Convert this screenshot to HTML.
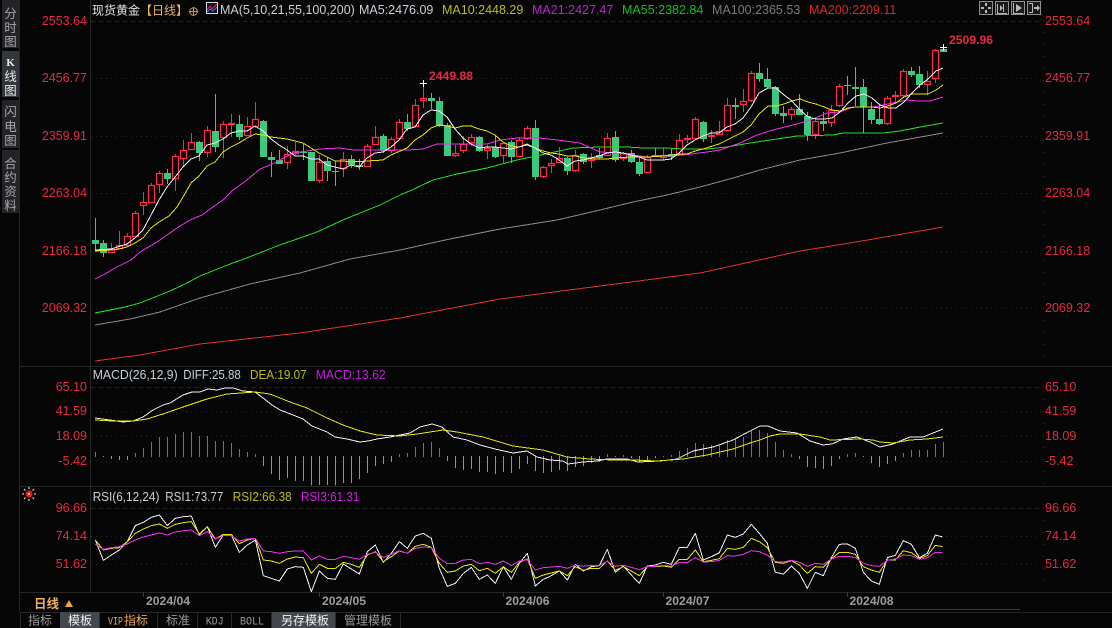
<!DOCTYPE html>
<html><head><meta charset="utf-8"><title>现货黄金</title>
<style>
html,body{margin:0;padding:0;background:#060606;width:1112px;height:628px;overflow:hidden}
svg{display:block;position:absolute;left:0;top:0}
text{font-family:"Liberation Sans","Noto Sans CJK SC",sans-serif;font-size:12.5px;white-space:pre}
.r{fill:#e62a42}
.e{text-anchor:end}
.s{font-size:12.5px;fill:#a8a8a8;text-anchor:middle;font-family:"Noto Sans CJK SC","Liberation Sans",sans-serif}
.t{font-size:12px;fill:#9a9a9a;font-family:"Noto Sans CJK SC","Liberation Sans",sans-serif}
.m{font-family:"Liberation Mono","Noto Sans CJK SC",monospace;font-size:11px}
.d{fill:#9c9c9c;font-weight:bold;font-size:12.2px}
.l{fill:none;stroke-width:1;stroke-linejoin:round;shape-rendering:crispEdges}
.z{vector-effect:non-scaling-stroke}
</style></head><body>
<svg width="1112" height="628" viewBox="0 0 1112 628" xmlns="http://www.w3.org/2000/svg">
<rect width="1112" height="628" fill="#060606"/>

<!-- sidebar -->
<rect x="2" y="0" width="17" height="48" fill="#222428"/>
<rect x="2" y="51" width="17" height="46" fill="#34363d"/>
<rect x="2" y="100" width="17" height="48" fill="#222428"/>
<rect x="2" y="150" width="17" height="63" fill="#222428"/>
<text class="s" x="10.5" y="18">分</text><text class="s" x="10.5" y="32">时</text><text class="s" x="10.5" y="46">图</text>
<text class="s" x="10.5" y="66" style="font-family:'Liberation Serif',serif;font-weight:bold;font-size:11px;fill:#e8e8e8">K</text><text class="s" x="10.5" y="81" style="fill:#e8e8e8">线</text><text class="s" x="10.5" y="95" style="fill:#e8e8e8">图</text>
<text class="s" x="10.5" y="116">闪</text><text class="s" x="10.5" y="131">电</text><text class="s" x="10.5" y="145">图</text>
<text class="s" x="10.5" y="168">合</text><text class="s" x="10.5" y="182">约</text><text class="s" x="10.5" y="196">资</text><text class="s" x="10.5" y="210">料</text>

<!-- frame lines -->
<g stroke="#262626" stroke-width="1" fill="none">
<path d="M19.5 0V612M90.5 0V592M20 366.5H1112M20 486.5H1112M20 592.5H1112M20 612.5H1112"/>
</g>
<path d="M670 609.5H1020" stroke="#3a3a3a"/>

<!-- grid -->
<g fill="none" stroke="#262626">
<path stroke-dasharray="4 4" d="M91 21.5H1040M91 387.5H1040M91 508.5H1040"/>
<path stroke-dasharray="1 4" d="M91 78.5H1040M91 136.5H1040M91 193.5H1040M91 251.5H1040M91 308.5H1040M91 411.5H1040M91 436.5H1040M91 461.5H1040M91 536.5H1040M91 564.5H1040"/>
<path stroke-dasharray="1 11" stroke="#333" d="M1043.5 20V366M1043.5 387V486M1043.5 508V590"/>
</g>

<!-- left axis -->
<g class="r">
<text class="r e" x="87" y="25">2553.64</text><text class="r e" x="87" y="82">2456.77</text><text class="r e" x="87" y="140">2359.91</text><text class="r e" x="87" y="197">2263.04</text><text class="r e" x="87" y="255">2166.18</text><text class="r e" x="87" y="312">2069.32</text>
<text class="r e" x="87" y="391">65.10</text><text class="r e" x="87" y="415">41.59</text><text class="r e" x="87" y="440">18.09</text><text class="r e" x="87" y="465">-5.42</text>
<text class="r e" x="87" y="512">96.66</text><text class="r e" x="87" y="540">74.14</text><text class="r e" x="87" y="568">51.62</text>
<text class="r" x="1045" y="25">2553.64</text><text class="r" x="1045" y="82">2456.77</text><text class="r" x="1045" y="140">2359.91</text><text class="r" x="1045" y="197">2263.04</text><text class="r" x="1045" y="255">2166.18</text><text class="r" x="1045" y="312">2069.32</text>
<text class="r" x="1045" y="391">65.10</text><text class="r" x="1045" y="415">41.59</text><text class="r" x="1045" y="440">18.09</text><text class="r" x="1045" y="465">-5.42</text>
<text class="r" x="1045" y="512">96.66</text><text class="r" x="1045" y="540">74.14</text><text class="r" x="1045" y="568">51.62</text>
</g>

<!-- header -->
<text x="92" y="14.5" fill="#e6e6e6" style="font-size:12px">现货黄金</text>
<text x="140" y="14.5" fill="#f0b25a" style="font-size:12px">【日线】</text>
<g fill="none" stroke="#c89a4a"><circle cx="193.5" cy="11.5" r="3.8"/><path d="M189 11.5H198M193.5 7V16"/></g>
<rect x="206.5" y="2.5" width="11" height="11" fill="#101030" stroke="#d8d8e8"/>
<path d="M207 10L210 6L212 9L217 4" stroke="#e83030" fill="none"/><path d="M207 12L210 9L213 11L217 7" stroke="#4a70e8" fill="none"/>
<text x="220" y="14" fill="#c8d0d8">MA(5,10,21,55,100,200)</text>
<text x="359" y="14" fill="#c8d0d8">MA5:2476.09</text>
<text x="442" y="14" fill="#bcbc20">MA10:2448.29</text>
<text x="532" y="14" fill="#c020d8">MA21:2427.47</text>
<text x="622" y="14" fill="#10c020">MA55:2382.84</text>
<text x="712" y="14" fill="#747c80">MA100:2365.53</text>
<text x="809" y="14" fill="#d82828">MA200:2209.11</text>

<!-- toolbar icons -->
<g fill="#1a1a1a" stroke="#909090">
<rect x="979.5" y="1.5" width="13" height="13"/><rect x="995.5" y="1.5" width="13" height="13"/><rect x="1011.5" y="1.5" width="13" height="13"/><rect x="1027.5" y="1.5" width="13" height="13"/>
</g>
<g fill="#b8b8b8">
<path d="M985 3h2v3h-2zM985 10h2v3h-2zM981 7h3v2h-3zM988 7h3v2h-3z"/>
<path d="M1003 4h1v8h-1zM1000 5l3 3-3 3zM997 4h1v9h9v1h-10z"/>
<path d="M1016 4l6 4-6 4zM1013 3h1v10h9v1h-10z"/>
<path d="M1029 3h4v10h-4v-1h3V4h-3zM1034 7h3V5l3 3-3 3V9h-3z"/>
</g>

<!-- candles: red wicks -->
<path stroke="#ff2a4c" stroke-width="1" fill="none" d="M111.5 243V253M119.5 231V249M127.5 233V247M135.5 211V237M143.5 192V215M151.5 183V203M159.5 171V193M175.5 154V191M183.5 140V167M191.5 133V150M207.5 126V157M223.5 121V158M231.5 114V137M247.5 117V136M255.5 102V128M287.5 146V169M295.5 142V155M319.5 155V183M343.5 152V177M367.5 144V167M375.5 126V145M391.5 137V153M399.5 119V139M415.5 99V127M423.5 83V108M455.5 145V157M463.5 136V153M471.5 134V146M487.5 145V159M503.5 143V163M519.5 137V157M527.5 126V140M543.5 166V178M551.5 159V173M559.5 147V163M575.5 150V172M591.5 153V168M607.5 133V156M623.5 152V161M647.5 155V173M663.5 148V160M679.5 134V156M687.5 135V143M695.5 117V140M711.5 130V143M719.5 121V135M727.5 98V131M743.5 89V112M751.5 71V102M791.5 107V120M815.5 118V139M831.5 105V127M839.5 84V107M887.5 96V125M895.5 91V103M903.5 69V97M927.5 71V95M935.5 49V83"/>
<!-- green wicks -->
<path stroke="#3cc880" stroke-width="1" fill="none" d="M95.5 218V250M103.5 240V257M167.5 169V184M199.5 141V161M215.5 94V152M239.5 115V140M263.5 120V157M271.5 152V177M279.5 150V164M303.5 144V160M311.5 152V181M327.5 157V181M335.5 161V186M351.5 155V168M359.5 159V170M383.5 134V153M407.5 114V131M431.5 93V109M439.5 97V127M447.5 123V156M479.5 136V152M495.5 135V158M511.5 140V163M535.5 120V180M567.5 157V175M583.5 153V164M599.5 148V159M615.5 131V162M631.5 150V163M639.5 158V176M655.5 148V157M671.5 149V160M703.5 121V142M735.5 98V119M759.5 63V82M767.5 68V88M775.5 86V116M783.5 106V123M799.5 94V115M807.5 112V141M823.5 112V131M847.5 76V95M855.5 67V106M863.5 79V133M871.5 102V124M879.5 105V125M911.5 67V77M919.5 66V88M943.5 47V52"/>
<!-- green bodies -->
<path fill="#3ac97f" d="M92 240h7v4h-7zM100 243h7v10h-7zM164 173h7v6h-7zM196 142h7v11h-7zM212 131h7v16h-7zM236 124h7v13h-7zM260 121h7v36h-7zM268 157h7v3h-7zM276 160h7v4h-7zM300 152h7v1h-7zM308 152h7v29h-7zM324 161h7v10h-7zM332 171h7v1h-7zM348 159h7v6h-7zM356 165h7v2h-7zM380 136h7v15h-7zM404 122h7v7h-7zM428 98h7v3h-7zM436 101h7v25h-7zM444 125h7v31h-7zM476 137h7v14h-7zM492 147h7v10h-7zM508 142h7v15h-7zM532 128h7v49h-7zM564 158h7v13h-7zM580 154h7v8h-7zM596 155h7v3h-7zM612 137h7v23h-7zM628 153h7v9h-7zM636 162h7v12h-7zM652 155h7v1h-7zM668 154h7v3h-7zM700 122h7v17h-7zM732 105h7v2h-7zM756 73h7v6h-7zM764 79h7v8h-7zM772 87h7v27h-7zM780 113h7v3h-7zM796 109h7v6h-7zM804 116h7v19h-7zM820 121h7v3h-7zM844 85h7v1h-7zM852 87h7v2h-7zM860 87h7v20h-7zM868 109h7v11h-7zM876 119h7v5h-7zM908 71h7v4h-7zM916 74h7v11h-7zM940 49h7v3h-7z"/>
<!-- red bodies -->
<path fill="#060606" stroke="#ff2a4c" stroke-width="1.2" d="M108.5 249.5h6v3h-6zM116.5 245.5h6v3h-6zM124.5 236.5h6v9h-6zM132.5 213.5h6v23h-6zM140.5 202.5h6v3h-6zM148.5 185.5h6v17h-6zM156.5 173.5h6v11h-6zM172.5 156.5h6v22h-6zM180.5 150.5h6v8h-6zM188.5 142.5h6v7h-6zM204.5 130.5h6v22h-6zM220.5 124.5h6v13h-6zM228.5 123.5h6v1h-6zM244.5 126.5h6v9h-6zM252.5 119.5h6v7h-6zM284.5 154.5h6v8h-6zM292.5 151.5h6v2h-6zM316.5 162.5h6v18h-6zM340.5 159.5h6v9h-6zM364.5 146.5h6v20h-6zM372.5 137.5h6v7h-6zM388.5 139.5h6v11h-6zM396.5 122.5h6v16h-6zM412.5 105.5h6v21h-6zM420.5 98.5h6v2h-6zM452.5 153.5h6v2h-6zM460.5 144.5h6v6h-6zM468.5 137.5h6v5h-6zM484.5 148.5h6v2h-6zM500.5 143.5h6v12h-6zM516.5 140.5h6v16h-6zM524.5 128.5h6v10h-6zM540.5 167.5h6v9h-6zM548.5 163.5h6v2h-6zM556.5 158.5h6v4h-6zM572.5 155.5h6v15h-6zM588.5 157.5h6v3h-6zM604.5 138.5h6v17h-6zM620.5 153.5h6v5h-6zM644.5 157.5h6v15h-6zM660.5 155.5h6v2h-6zM676.5 140.5h6v14h-6zM684.5 138.5h6v1h-6zM692.5 119.5h6v19h-6zM708.5 135.5h6v1h-6zM716.5 131.5h6v3h-6zM724.5 105.5h6v25h-6zM740.5 101.5h6v3h-6zM748.5 73.5h6v27h-6zM788.5 109.5h6v5h-6zM812.5 121.5h6v13h-6zM828.5 110.5h6v12h-6zM836.5 86.5h6v19h-6zM884.5 98.5h6v25h-6zM892.5 95.5h6v1h-6zM900.5 71.5h6v24h-6zM924.5 81.5h6v3h-6zM932.5 50.5h6v28h-6z"/>

<!-- crosses + labels -->
<path stroke="#fff" d="M420 83.5H427M423.5 80V87M940 47.5H947M943.5 44V51"/>
<text x="429" y="80" class="r" style="font-weight:bold;font-size:12.2px">2449.88</text>
<text x="949" y="44" class="r" style="font-weight:bold;font-size:12.2px">2509.96</text>

<!-- MA lines -->
<g class="l">
<polyline stroke="#e03030" points="95,361 140,355 200,344 300,333 400,318 500,299 600,286 700,273 800,251 850,243 943,227"/>
<polyline stroke="#8a8a8a" points="95,325 130,319 160,312 200,298 250,284 300,273 350,259 400,250 450,239 500,229 557,220 600,210 633,202 667,195 700,187 733,178 760,170 800,160 840,153 887,143 943,133"/>
<polyline stroke="#22e022" points="95,313 110,310 125,307 140,303 155,297 170,291 185,284 200,276 215,270 230,264 244,259 257,254 277,246 297,239 317,232 343,220 360,213 380,205 400,195 412,190 433,180 457,174 487,168 517,160 550,153 573,148 600,147 627,147 643,148 667,148 683,149 707,149 727,147 750,143 770,140 797,136 833,135 843,133 883,133 900,131 920,127 943,123"/>
<polyline stroke="#f030f0" points="95,279 105,274 115,268 131,260 140,252 157,242 177,228 190,220 202,215 213,207 223,200 233,190 247,180 260,169 270,165 280,160 293,153 307,151 320,149 340,148 353,150 370,150 390,150 407,150 423,149 437,144 463,144 487,144 500,140 517,138 540,138 557,140 580,143 600,152 617,153 633,155 647,157 667,156 683,155 707,152 720,150 740,143 757,135 773,130 793,125 808,121 827,113 840,112 853,107 873,107 893,103 907,100 917,101 930,101 943,97"/>
<polyline stroke="#e8e810" points="95,251 111,250 119,249 127,247 135,243 143,238 151,228 159,222 169,216 177,207 183,197 191,183 199,176 207,166 215,162 223,152 231,147 239,143 247,138 255,134 263,135 271,137 279,138 287,139 295,141 303,143 311,148 319,153 327,157 335,161 343,161 351,162 367,161 383,160 391,155 407,148 415,140 423,135 431,128 439,125 447,126 455,128 463,126 471,126 479,129 487,131 495,135 503,142 511,146 519,147 527,145 535,148 543,151 551,153 559,154 567,156 575,156 591,159 607,159 615,158 631,157 647,157 663,156 679,154 687,154 695,151 703,149 719,144 727,140 743,132 751,125 759,114 768,106 776,106 784,104 792,101 800,99 808,102 816,104 824,107 832,110 840,111 848,108 856,107 864,107 872,107 880,108 888,106 896,103 904,97 912,94 920,94 928,94 936,90 943,85"/>
<polyline stroke="#f2f2f2" points="95,250 111,249 127,244 135,238 143,230 151,215 159,200 167,187 175,177 183,167 191,159 199,156 207,145 215,143 223,139 231,133 239,131 247,131 255,126 263,131 271,139 279,145 287,150 295,156 303,156 311,159 319,159 327,165 335,167 343,169 351,165 359,167 367,158 375,153 383,152 391,147 399,140 407,129 415,127 423,115 431,110 439,111 447,117 455,129 463,138 471,144 479,148 487,147 495,147 503,148 511,149 519,147 527,144 535,148 543,153 551,155 559,160 567,166 575,161 583,160 591,158 599,156 607,153 615,152 623,153 631,155 639,157 647,160 655,160 663,160 671,159 679,153 687,145 695,140 703,136 711,133 719,133 727,127 735,124 743,118 751,107 759,93 768,88 776,88 784,95 792,101 800,110 808,117 816,119 824,119 832,118 840,112 848,103 856,96 864,94 872,98 880,105 888,108 896,108 904,102 912,93 920,85 928,79 936,71 943,68"/>
</g>

<!-- MACD title -->
<text x="92.7" y="379" fill="#c8d0d8" textLength="85" lengthAdjust="spacingAndGlyphs">MACD(26,12,9)</text>
<text x="183.3" y="379" fill="#c8d0d8" textLength="57.5" lengthAdjust="spacingAndGlyphs">DIFF:25.88</text>
<text x="250" y="379" fill="#bcbc20" textLength="56.7" lengthAdjust="spacingAndGlyphs">DEA:19.07</text>
<text x="315.7" y="379" fill="#c020d8" textLength="70" lengthAdjust="spacingAndGlyphs">MACD:13.62</text>

<!-- MACD histogram -->
<path stroke="#e8405a" fill="none" d="M95.5 452V457M135.5 453V457M143.5 448V457M151.5 442V457M159.5 437V457M167.5 437V457M175.5 434V457M183.5 432V457M191.5 432V457M199.5 436V457M207.5 436V457M215.5 441V457M223.5 441V457M231.5 443V457M239.5 449V457M247.5 452V457M255.5 454V457M399.5 454V457M407.5 453V457M415.5 447V457M423.5 443V457M431.5 442V457M439.5 448V457M607.5 454V457M623.5 455V457M663.5 456V457M671.5 455V457M679.5 451V457M687.5 448V457M695.5 443V457M703.5 444V457M711.5 445V457M719.5 445V457M727.5 440V457M735.5 438V457M743.5 437V457M751.5 431V457M759.5 430V457M767.5 433V457M775.5 442V457M783.5 450V457M791.5 454V457M847.5 454V457M855.5 453V457M903.5 453V457M911.5 450V457M919.5 450V457M927.5 450V457M935.5 444V457M943.5 442V457"/>
<path stroke="#4cb98a" fill="none" d="M103.5 456V457M111.5 456V459M119.5 456V460M127.5 456V460M263.5 456V466M271.5 456V474M279.5 456V480M287.5 456V478M295.5 456V481M303.5 456V481M311.5 456V485.5M319.5 456V485M327.5 456V485M335.5 456V485.5M343.5 456V483M351.5 456V483M359.5 456V479M367.5 456V473M375.5 456V466M383.5 456V464M391.5 456V462M447.5 456V461M455.5 456V468M463.5 456V470M471.5 456V469M479.5 456V472M487.5 456V472M495.5 456V474M503.5 456V472M511.5 456V473M519.5 456V469M527.5 456V464M535.5 456V471M543.5 456V473M551.5 456V472M559.5 456V470M567.5 456V471M575.5 456V467M583.5 456V466M591.5 456V463M599.5 456V462M615.5 456V457M631.5 456V458M639.5 456V462M647.5 456V461M655.5 456V458M799.5 456V459M807.5 456V467M815.5 456V468M823.5 456V469M831.5 456V466M839.5 456V459M863.5 456V457M871.5 456V463M879.5 456V467M887.5 456V464M895.5 456V461"/>

<!-- MACD lines -->
<g class="l">
<polyline stroke="#f2f2f2" points="95,418 110,420 123,422 133,421 143,417 153,410 163,405 170,403 183,395 192,392 200,392 208,389 217,390 225,388 233,388 243,391 255,392 263,398 272,405 280,410 293,415 303,419 312,426 327,432 335,437 347,439 360,442 368,441 377,439 390,437 400,435 410,433 420,427 432,424 442,427 453,437 467,440 480,445 495,449 513,453 527,451 537,457 550,460 563,461 568,464 583,462 597,461 607,459 627,459 638,462 660,461 677,459 693,451 713,447 733,440 750,431 760,426 768,426 780,431 797,433 810,441 823,445 832,444 843,439 857,437 870,442 880,447 893,444 910,437 923,437 943,429"/>
<polyline stroke="#e8e810" points="95,420 113,421 133,421 147,419 163,414 183,407 207,399 227,394 255,392 270,394 290,402 307,408 327,418 343,425 360,431 377,435 400,436 417,434 443,430 457,432 483,437 513,446 543,450 567,457 590,459 613,460 633,460 657,461 683,459 707,455 733,449 750,443 760,440 770,436 780,434 800,434 820,437 830,440 860,439 873,440 880,442 893,443 910,440 927,439 943,437"/>
</g>

<!-- RSI sun icon -->
<g fill="none" stroke="#f0f0f0"><path d="M29 487V489M29 499V501M22 494H24M34 494H36M24 489L25.500 490.500M34 489L32.500 490.500M24 499L25.500 497.500M34 499L32.500 497.500"/></g>
<circle cx="29" cy="494" r="3.500" fill="#f01818"/><circle cx="29" cy="494" r="1" fill="#fff"/>

<!-- RSI title -->
<text x="92.7" y="501" fill="#c8d0d8" textLength="66.7" lengthAdjust="spacingAndGlyphs">RSI(6,12,24)</text>
<text x="165.3" y="501" fill="#c8d0d8" textLength="58" lengthAdjust="spacingAndGlyphs">RSI1:73.77</text>
<text x="232.700" y="501" fill="#bcbc20" textLength="59" lengthAdjust="spacingAndGlyphs">RSI2:66.38</text>
<text x="301" y="501" fill="#d020e0" textLength="58.3" lengthAdjust="spacingAndGlyphs">RSI3:61.31</text>

<!-- RSI lines -->
<g class="l" transform="translate(0,485) scale(.33333)">
<polyline class="z" stroke="#f2f2f2" points="286,165 310,226 334,210 358,195 382,170 406,122 430,112 454,97 478,90 502,122 526,100 550,95 574,93 598,150 622,125 646,187 670,150 694,150 718,202 742,180 766,165 790,272 814,280 838,288 862,252 886,245 910,247 934,320 958,258 982,280 1006,283 1030,237 1054,252 1078,267 1102,200 1126,180 1150,232 1174,205 1198,170 1222,190 1246,153 1270,145 1294,160 1318,250 1342,304 1366,295 1390,265 1414,247 1438,283 1462,270 1486,295 1510,245 1534,283 1558,235 1582,205 1606,303 1630,283 1654,272 1678,258 1702,285 1726,238 1750,258 1774,245 1798,242 1822,193 1846,262 1870,243 1894,270 1918,295 1942,243 1966,240 1990,232 2014,238 2038,187 2062,187 2086,145 2110,225 2134,215 2158,203 2182,150 2206,157 2230,147 2254,118 2278,145 2302,175 2326,262 2350,267 2374,243 2398,265 2422,310 2446,262 2470,272 2494,218 2518,178 2542,177 2566,190 2590,262 2614,288 2638,298 2662,218 2686,211 2710,167 2734,178 2758,218 2782,205 2806,150 2828,156"/>
<polyline class="z" stroke="#e8e810" points="286,165 310,195 334,190 358,188 382,170 406,145 430,132 454,122 478,117 502,130 526,118 550,113 574,110 598,147 622,125 646,162 670,148 694,148 718,176 742,165 766,160 790,225 814,228 838,235 862,222 886,216 910,218 934,265 958,238 982,250 1006,250 1030,232 1054,238 1078,247 1102,210 1126,200 1150,230 1174,215 1198,198 1222,205 1246,184 1270,178 1294,187 1318,235 1342,262 1366,258 1390,243 1414,238 1438,257 1462,250 1486,265 1510,245 1534,262 1558,232 1582,222 1606,280 1630,270 1654,264 1678,258 1702,272 1726,245 1750,256 1774,250 1798,250 1822,228 1846,256 1870,245 1894,258 1918,272 1942,245 1966,245 1990,243 2014,247 2038,223 2062,223 2086,195 2110,230 2134,226 2158,221 2182,190 2206,193 2230,187 2254,160 2278,170 2302,188 2326,232 2350,235 2374,227 2398,240 2422,265 2446,245 2470,247 2494,222 2518,202 2542,202 2566,208 2590,245 2614,255 2638,262 2662,225 2686,225 2710,197 2734,203 2758,220 2782,212 2806,181 2828,185"/>
<polyline class="z" stroke="#f030f0" points="286,178 310,193 334,188 358,185 382,177 406,165 430,156 454,150 478,144 502,150 526,141 550,137 574,135 598,152 622,140 646,162 670,152 694,152 718,168 742,162 766,160 790,198 814,200 838,205 862,200 886,198 910,198 934,225 958,213 982,223 1006,223 1030,214 1054,218 1078,223 1102,208 1126,202 1150,217 1174,208 1198,197 1222,205 1246,190 1270,186 1294,188 1318,220 1342,236 1366,235 1390,225 1414,223 1438,236 1462,232 1486,238 1510,228 1534,242 1558,228 1582,224 1606,255 1630,248 1654,246 1678,244 1702,250 1726,240 1750,244 1774,241 1798,241 1822,229 1846,244 1870,241 1894,247 1918,254 1942,245 1966,244 1990,241 2014,243 2038,232 2062,232 2086,218 2110,231 2134,230 2158,226 2182,212 2206,213 2230,208 2254,197 2278,200 2302,210 2326,230 2350,231 2374,226 2398,232 2422,244 2446,235 2470,238 2494,222 2518,214 2542,214 2566,218 2590,234 2614,242 2638,244 2662,226 2686,222 2710,210 2734,212 2758,223 2782,218 2806,202 2828,202"/>
</g>

<!-- date axis -->
<path stroke="#3a3a3a" d="M143.5 592V597M319.5 592V597M503.5 592V597M663.5 592V597M847.5 592V597"/>
<text class="d" x="146" y="605">2024/04</text>
<text class="d" x="322" y="605">2024/05</text>
<text class="d" x="505.5" y="605">2024/06</text>
<text class="d" x="665.5" y="605">2024/07</text>
<text class="d" x="849.5" y="605">2024/08</text>

<!-- period selector -->
<text x="34" y="608" fill="#f0b060" style="font-size:12.5px;font-weight:bold">日线</text>
<path d="M69 600L73 607H65z" fill="#e8a850"/>

<!-- bottom tabs -->
<rect x="60" y="612" width="39" height="16" fill="#45474f"/>
<rect x="272" y="612" width="63" height="16" fill="#45474f"/>
<path stroke="#2a2a2a" d="M20.5 613V628M99.5 613V628M157.5 613V628M197.5 613V628M231.5 613V628M271.5 613V628M335.5 613V628M400.5 613V628"/>
<text class="t" x="28" y="624.5">指标</text>
<text class="t" x="68" y="624.5" style="fill:#f0f0f0">模板</text>
<text class="t m" x="108" y="624.5" style="fill:#e8a850" textLength="15" lengthAdjust="spacingAndGlyphs">VIP</text><text class="t" x="124" y="624.5" style="fill:#e8a850">指标</text>
<text class="t" x="166" y="624.5">标准</text>
<text class="t m" x="205.700" y="624.5" textLength="18" lengthAdjust="spacingAndGlyphs">KDJ</text>
<text class="t m" x="240" y="624.5" textLength="24" lengthAdjust="spacingAndGlyphs">BOLL</text>
<text class="t" x="281" y="624.5" style="fill:#f0f0f0">另存模板</text>
<text class="t" x="344" y="624.5">管理模板</text>
</svg>
</body></html>
